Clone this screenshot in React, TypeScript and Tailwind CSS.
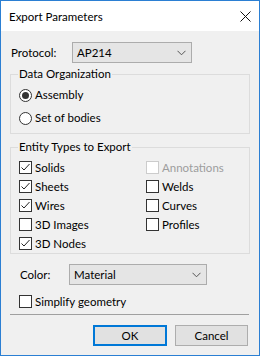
import React from "react";

const font = { fontFamily: 'Lato, "Noto Sans", sans-serif' };

function Chevron() {
  return (
    <svg width="9" height="6" viewBox="0 0 9 6" className="block">
      <path d="M0.5 0.8 L4.5 4.8 L8.5 0.8" fill="none" stroke="#555" strokeWidth="1" />
    </svg>
  );
}

function Select({ value, w, chevronRight }: { value: string; w: string; chevronRight: string }) {
  return (
    <div className={`${w} h-[21px] bg-[#e5e5e5] border border-[#acacac] flex items-center justify-between pl-[4px] ${chevronRight}`}>
      <span className="text-[11.5px] leading-[14px]">{value}</span>
      <Chevron />
    </div>
  );
}

function Check({ checked, disabled, label }: { checked?: boolean; disabled?: boolean; label: string }) {
  return (
    <div className="h-[19px] flex items-center">
      <div
        className={`w-[13px] h-[13px] bg-white border ${disabled ? "border-[#cccccc]" : "border-[#333333]"} flex items-center justify-center`}
      >
        {checked && (
          <svg width="11" height="11" viewBox="0 0 11 11" className="block">
            <path d="M1.5 5.5 L4 8 L9.5 2" fill="none" stroke="#222" strokeWidth="1" />
          </svg>
        )}
      </div>
      <span className={`ml-[3px] text-[11.5px] leading-[14px] ${disabled ? "text-[#9d9d9d]" : "text-black"}`}>{label}</span>
    </div>
  );
}

function Radio({ checked, label }: { checked?: boolean; label: string }) {
  return (
    <div className="h-[18px] flex items-center">
      <div className="w-[13px] h-[13px] rounded-full bg-white border border-[#333333] flex items-center justify-center">
        {checked && <div className="w-[7px] h-[7px] rounded-full bg-[#333333]" />}
      </div>
      <span className="ml-[3px] text-[11.5px] leading-[14px]">{label}</span>
    </div>
  );
}

export default function App() {
  return (
    <div className="w-[262px] h-[357px] bg-white text-black" style={font}>
      <div className="w-[260px] h-[356px] border border-[#2b7fd3] flex flex-col">
        {/* title bar */}
        <div className="h-[30px] bg-white flex items-center justify-between pl-[8px] pr-[8px] shrink-0">
          <span className="text-[11.5px] leading-[14px] mt-[1px]">Export Parameters</span>
          <svg width="11" height="11" viewBox="0 0 11 11" className="block">
            <path d="M0.5 0.5 L10.5 10.5 M10.5 0.5 L0.5 10.5" stroke="#111" strokeWidth="1" />
          </svg>
        </div>
        {/* body */}
        <div className="flex-1 bg-[#f0f0f0] flex flex-col">
          <div className="mt-[11px] pl-[10px] flex items-center">
            <span className="w-[61px] text-[11.5px] leading-[14px]">Protocol:</span>
            <Select value="AP214" w="w-[120px]" chevronRight="pr-[5px]" />
          </div>

          <div className="mt-[11px] ml-[9px] w-[240px] h-[60px] border border-[#dcdcdc] flex flex-col">
            <div className="-mt-[8px] ml-[7px] px-[1px] w-fit bg-[#f0f0f0] text-[11.5px] leading-[14px]">Data Organization</div>
            <div className="mt-[5px] ml-[8px] flex flex-col gap-[5px]">
              <Radio checked label="Assembly" />
              <Radio label="Set of bodies" />
            </div>
          </div>

          <div className="mt-[13px] ml-[9px] w-[240px] h-[107px] border border-[#dcdcdc] flex flex-col">
            <div className="-mt-[8px] ml-[7px] px-[1px] w-fit bg-[#f0f0f0] text-[11.5px] leading-[14px]">Entity Types to Export</div>
            <div className="mt-[4px] ml-[8px] grid grid-cols-[127px_1fr]">
              <Check checked label="Solids" />
              <Check disabled label="Annotations" />
              <Check checked label="Sheets" />
              <Check label="Welds" />
              <Check checked label="Wires" />
              <Check label="Curves" />
              <Check label="3D Images" />
              <Check label="Profiles" />
              <Check checked label="3D Nodes" />
            </div>
          </div>

          <div className="mt-[10px] pl-[19px] flex items-center">
            <span className="w-[49px] text-[11.5px] leading-[14px]">Color:</span>
            <Select value="Material" w="w-[138px]" chevronRight="pr-[5px]" />
          </div>

          <div className="mt-[7px] pl-[18px]">
            <Check label="Simplify geometry" />
          </div>

          <div className="mt-[3px] ml-[9px] w-[239px] h-[1px] bg-[#a0a0a0]" />

          <div className="mt-[10px] pl-[92px] flex gap-[8px]">
            <div className="w-[74px] h-[21px] border-2 border-[#0078d7] bg-[#e1e1e1] flex items-center justify-center text-[11.5px] leading-[14px]">
              OK
            </div>
            <div className="w-[73px] h-[21px] border border-[#adadad] bg-[#e1e1e1] flex items-center justify-center text-[11.5px] leading-[14px]">
              Cancel
            </div>
          </div>
        </div>
      </div>
    </div>
  );
}
